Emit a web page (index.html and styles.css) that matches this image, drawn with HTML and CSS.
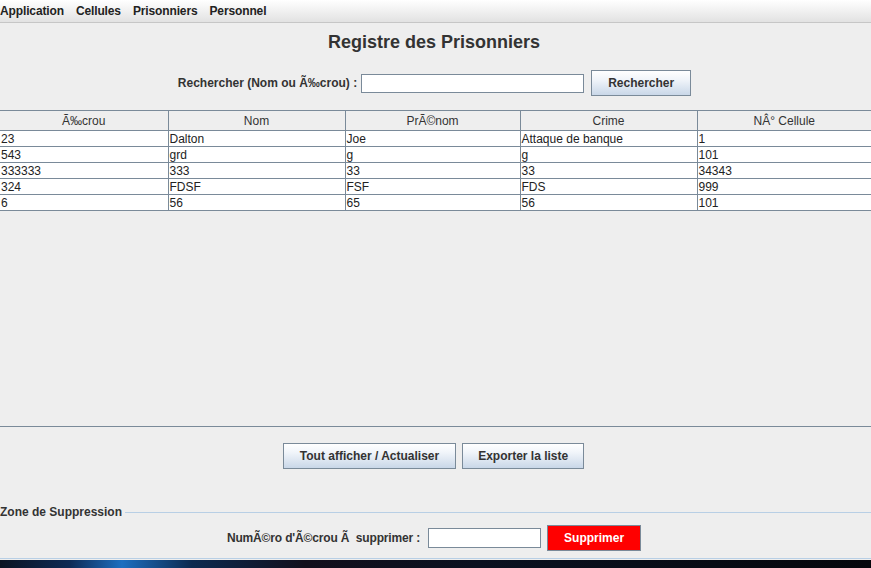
FILE: index.html
```html
<!DOCTYPE html>
<html>
<head>
    <title>Registre des Prisonniers</title>
    <link rel="stylesheet" href="styles.css">
</head>
<body>
    <!-- Barre de menu -->
    <div class="menubar">
        <span>Application</span>
        <span>Cellules</span>
        <span>Prisonniers</span>
        <span>Personnel</span>
    </div>

    <!-- Titre -->
    <h1 class="titre">Registre des Prisonniers</h1>

    <!-- Recherche -->
    <div class="recherche">
        <label>Rechercher (Nom ou Ã‰crou) :</label>
        <input type="text" class="champ-recherche">
        <button class="btn btn-recherche">Rechercher</button>
    </div>

    <!-- Tableau -->
    <div class="scroll">
        <table class="tableau">
            <colgroup>
                <col style="width:168px">
                <col style="width:177px">
                <col style="width:175px">
                <col style="width:177px">
                <col>
            </colgroup>
            <thead>
                <tr>
                    <th>Ã‰crou</th>
                    <th>Nom</th>
                    <th>PrÃ©nom</th>
                    <th>Crime</th>
                    <th>NÂ° Cellule</th>
                </tr>
            </thead>
            <tbody id="lignes"></tbody>
        </table>
    </div>

    <!-- Actions -->
    <div class="actions">
        <button class="btn btn-action">Tout afficher / Actualiser</button>
        <button class="btn btn-action">Exporter la liste</button>
    </div>

    <!-- Suppression -->
    <fieldset class="suppression">
        <legend>Zone de Suppression</legend>
        <div class="ligne-suppr">
            <label>NumÃ©ro d'Ã©crou Ã&nbsp; supprimer :</label>
            <input type="text" class="champ-suppr">
            <button class="btn btn-suppr">Supprimer</button>
        </div>
    </fieldset>

    <div class="bureau"></div>

    <script>
        // Donnees des prisonniers
        const prisonniers = [
            ['23', 'Dalton', 'Joe', 'Attaque de banque', '1'],
            ['543', 'grd', 'g', 'g', '101'],
            ['333333', '333', '33', '33', '34343'],
            ['324', 'FDSF', 'FSF', 'FDS', '999'],
            ['6', '56', '65', '56', '101']
        ];

        document.getElementById('lignes').innerHTML = prisonniers.map(p => `
            <tr>${p.map(v => `<td>${v}</td>`).join('')}</tr>
        `).join('');
    </script>
</body>
</html>
```

FILE: styles.css
```css
body {
    background-color: #eeeeee;
    color: #333333;
    font-family: "Liberation Sans", Arial, sans-serif;
    font-size: 12px;
    margin: 0;
    padding: 0;
    width: 871px;
    height: 568px;
    overflow: hidden;
}
.menubar {
    display: flex;
    gap: 12px;
    align-items: center;
    background: linear-gradient(#ffffff, #e2e2e2);
    border-bottom: 1px solid #c6c6c6;
    font-weight: bold;
    letter-spacing: -0.13px;
    color: #222222;
    box-sizing: border-box;
    height: 23px;
}
.titre {
    margin: 0;
    padding-top: 8px;
    height: 38px;
    box-sizing: border-box;
    text-align: center;
    font-size: 18px;
    line-height: 22px;
    color: #333333;
    padding-right: 3px;
}
.recherche {
    display: flex;
    justify-content: center;
    align-items: center;
    gap: 4px;
    height: 26px;
    margin-top: 9px;
    padding-right: 2px;
    font-weight: bold;
}
.champ-recherche {
    width: 223px;
    height: 19px;
    margin-right: 3px;
}
input {
    box-sizing: border-box;
    border: 1px solid #7a8a99;
    background: #ffffff;
    padding: 0 2px;
    font-family: inherit;
    font-size: 12px;
}
.btn {
    font-family: inherit;
    font-size: 12px;
    font-weight: bold;
    color: #333333;
    border: 1px solid #7a8a99;
    background: linear-gradient(#ffffff, #f1f5fa 35%, #c9d7e8);
    height: 26px;
    box-sizing: border-box;
    padding: 0 14px;
}
.btn-recherche {
    width: 100px;
}
.scroll {
    margin-top: 14px;
    height: 317px;
    border-bottom: 1px solid #7a8a99;
    box-sizing: border-box;
}
.tableau {
    width: 871px;
    border-collapse: collapse;
    table-layout: fixed;
}
.tableau th {
    height: 20px;
    box-sizing: border-box;
    font-weight: normal;
    background: #eeeeee;
    border: 1px solid #7a8a99;
    color: #333333;
    padding: 1px 0 0 0;
}
.tableau td {
    height: 16px;
    box-sizing: border-box;
    background: #ffffff;
    border: 1px solid #7a8a99;
    padding: 0 0 0 1px;
    line-height: 14px;
    color: #222222;
    white-space: nowrap;
    overflow: hidden;
}
.tableau th:first-child,
.tableau td:first-child {
    border-left: none;
}
.tableau th:last-child,
.tableau td:last-child {
    border-right: none;
}
.actions {
    display: flex;
    justify-content: center;
    gap: 6px;
    margin-top: 16px;
    padding-right: 4px;
}
.btn-action {
    padding: 0 16px;
}
.btn-action:last-child {
    padding: 0 15px;
}
.suppression {
    margin: 36px 0 0 0;
    padding: 6px 0 7px 0;
    border: none;
    border-top: 1px solid #b8cfe5;
    border-bottom: 1px solid #b8cfe5;
}
.suppression legend {
    font-weight: bold;
    padding: 0 3px 0 0;
    margin-left: 0;
}
.ligne-suppr {
    display: flex;
    justify-content: center;
    align-items: center;
    gap: 6px;
    padding-right: 8px;
    font-weight: bold;
}
.ligne-suppr label {
    margin-right: 2px;
    margin-left: 5px;
    letter-spacing: -0.15px;
}
.champ-suppr {
    width: 113px;
    height: 20px;
}
.btn-suppr {
    background: #ff0000;
    color: #ffffff;
    width: 94px;
}
.bureau {
    margin-top: 1px;
    height: 10px;
    background: linear-gradient(90deg, #0b1422 0%, #0d2a55 8%, #1d6fc0 14%, #0c2a50 22%, #120f1c 35%, #0a1120 55%, #05070c 100%);
}
```
